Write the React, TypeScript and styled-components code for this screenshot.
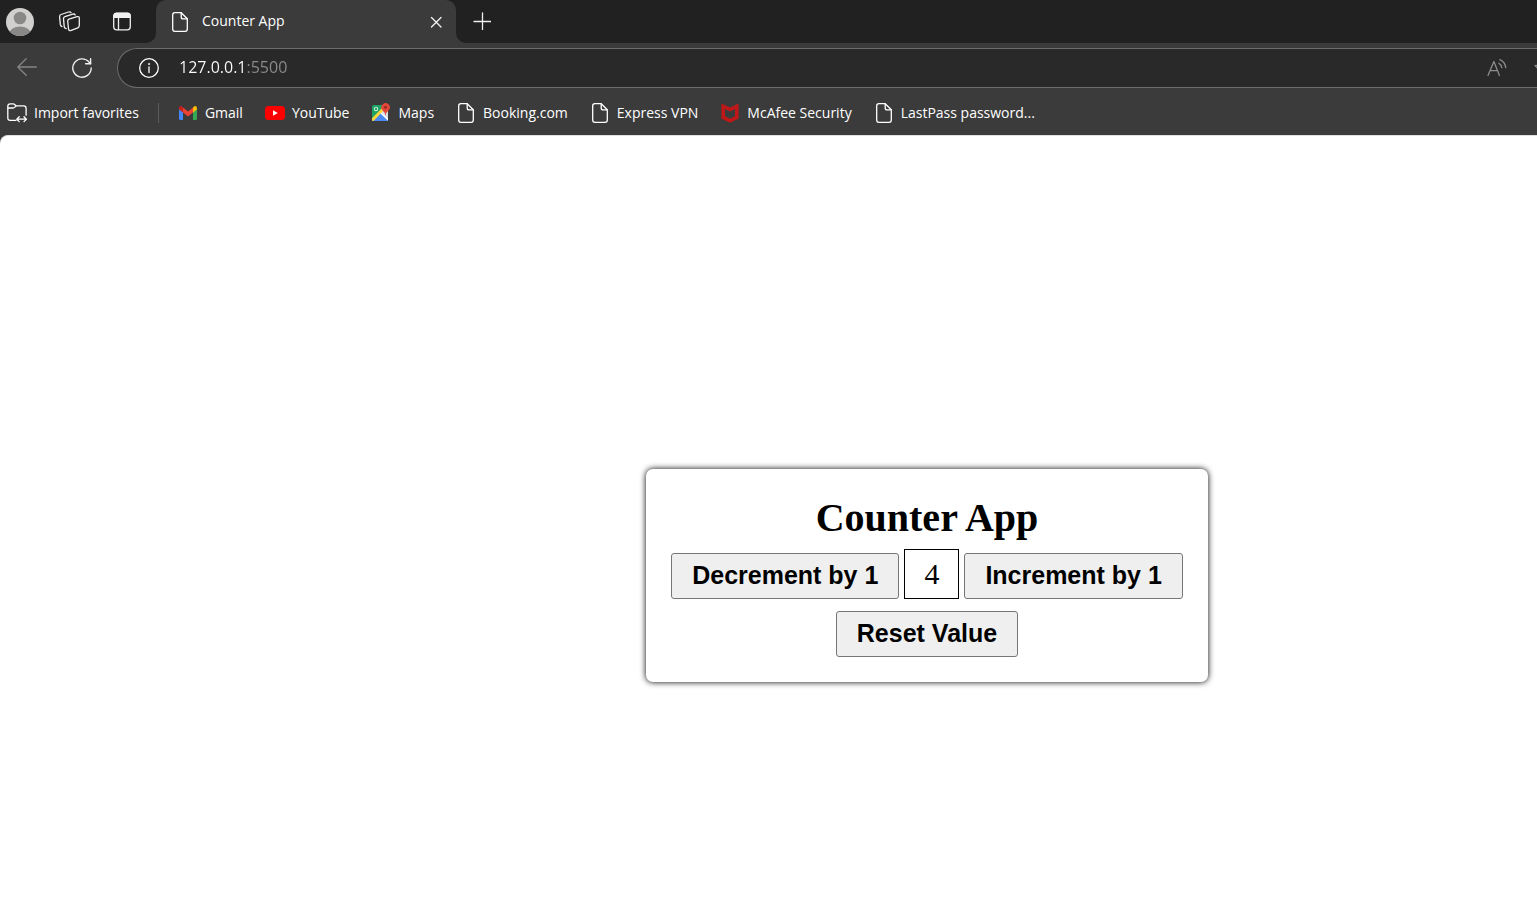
import React, { useState } from "react";
import styled, { createGlobalStyle } from "styled-components";

const GlobalStyle = createGlobalStyle`
  * { box-sizing: border-box; }
  body { margin: 0; background: #3b3b3b; }
`;

const Browser = styled.div`
  display: flex;
  flex-direction: column;
  min-height: 100vh;
  overflow: hidden;
  font-family: "Open Sans", "Noto Sans", sans-serif;
  font-size: 14px;
  line-height: 20px;
  color: #fff;
`;

const TitleBar = styled.header`
  display: flex;
  height: 43px;
`;

const TitleTools = styled.div`
  display: flex;
  align-items: center;
  width: 156px;
  padding-left: 6px;
  background: #212121;
  border-bottom-right-radius: 10px;
`;

const IconButton = styled.button<{ $width: number; $color?: string }>`
  display: flex;
  align-items: center;
  justify-content: center;
  flex: none;
  width: ${(p) => p.$width}px;
  height: 40px;
  padding: 0;
  border: 0;
  background: none;
  color: ${(p) => p.$color ?? "#f0f0f0"};
`;

const TabSlot = styled.div`
  width: 300px;
  background: #212121;
`;

const Tab = styled.div`
  display: flex;
  align-items: center;
  height: 43px;
  padding: 0 6px 0 16px;
  gap: 14px;
  background: #3b3b3b;
  border-radius: 10px 10px 0 0;
`;

const TabTitle = styled.span`
  flex: 1;
  padding-bottom: 2px;
`;

const TitleRest = styled.div`
  display: flex;
  align-items: center;
  flex: 1;
  padding: 0 0 2px 12px;
  background: #212121;
  border-bottom-left-radius: 10px;
`;

const Toolbar = styled.div`
  display: flex;
  align-items: center;
  height: 50px;
`;

const AddressBar = styled.label`
  display: flex;
  align-items: center;
  flex: 1;
  height: 40px;
  margin-left: 8px;
  padding-left: 21px;
  overflow: hidden;
  background: #292929;
  border: 1px solid #6c6c6c;
  border-right: 0;
  border-radius: 20px 0 0 20px;
`;

const AddressInput = styled.input`
  flex: 1;
  min-width: 0;
  margin-left: 20px;
  padding: 0 0 2px;
  border: 0;
  outline: 0;
  font: 16px/24px "Open Sans", "Noto Sans", sans-serif;
  color: #fff;
  background: linear-gradient(90deg, #fff 68px, #8c8c8c 68px);
  -webkit-background-clip: text;
  background-clip: text;
  -webkit-text-fill-color: transparent;
`;

const AddressActions = styled.div`
  display: flex;
  flex: none;
  margin-right: -32px;
`;

const Bookmarks = styled.nav`
  display: flex;
  align-items: center;
  height: 40px;
  margin-bottom: 2px;
  padding-left: 7px;
  gap: 22px;
  white-space: nowrap;
`;

const Bookmark = styled.a`
  display: flex;
  align-items: center;
  gap: 7px;
  color: #fff;
  text-decoration: none;
`;

const BookmarkIcon = styled.span`
  display: flex;
  justify-content: center;
  flex: none;
  width: 20px;
`;

const Divider = styled.span`
  width: 1px;
  height: 20px;
  margin: 0 -3px;
  background: #5c5c5c;
`;

const Page = styled.main`
  display: flex;
  flex: 1;
  align-items: center;
  justify-content: center;
  padding: 108px 0 0 317px;
  background: #fff;
  border-top: 1px solid #e0e0e0;
  border-top-left-radius: 8px;
`;

const Card = styled.section`
  display: flex;
  flex-direction: column;
  align-items: center;
  padding: 25px;
  border-radius: 7px;
  box-shadow: 0 0 6px #000;
  background: #fff;
  color: #000;
`;

const Heading = styled.h1`
  margin: 0 0 8px;
  font: bold 40px/47px "Liberation Serif", serif;
`;

const Controls = styled.div`
  display: flex;
  align-items: flex-end;
  gap: 5px;
  margin-bottom: 12px;
`;

const Value = styled.output`
  padding: 7px 19px;
  border: 1px solid #000;
  font: 30px/34px "Liberation Serif", serif;
`;

const CounterButton = styled.button`
  padding: 7px 20px 9px;
  border: 1px solid #767676;
  border-radius: 3px;
  background: #efefef;
  color: #000;
  font: bold 25px/28px "Liberation Sans", sans-serif;
`;

const line = {
  fill: "none",
  stroke: "currentColor",
  strokeLinecap: "round" as const,
  strokeLinejoin: "round" as const,
};

const AvatarIcon = () => (
  <svg width="28" height="28" viewBox="0 0 28 28">
    <clipPath id="avatar"><circle cx="14" cy="14" r="14" /></clipPath>
    <g clipPath="url(#avatar)">
      <rect width="28" height="28" fill="#d2d0ce" />
      <circle cx="14" cy="10" r="6.3" fill="#8a8886" />
      <ellipse cx="14" cy="25.5" rx="10.5" ry="7" fill="#8a8886" />
    </g>
  </svg>
);

const WorkspacesIcon = () => (
  <svg width="24" height="24" viewBox="0 0 24 24" {...line} strokeWidth="1.3">
    <path d="M11 9.2 19 6.7Q21.3 6.1 21.3 8.3V15.6Q21.3 17.2 19.8 17.8L13.2 20.4Q10.8 21.1 10.5 18.8L9.7 11.2Q9.6 9.7 11 9.2Z" />
    <path d="M8.2 18.6Q6.4 18.4 6.2 16.6L5.5 8.6Q5.4 7.1 6.9 6.6L14.8 4.1Q16.6 3.6 17.2 5" />
    <path d="M4 16.6Q2.5 16 2.3 14.4L1.6 6.6Q1.5 5 3 4.5L10.6 2Q12.3 1.5 13 2.7" />
  </svg>
);

const TabActionsIcon = () => (
  <svg width="24" height="24" viewBox="0 0 24 24" {...line} strokeWidth="1.3">
    <rect x="3.7" y="3.2" width="16.6" height="16.6" rx="3" />
    <path d="M4 7.3V6Q4 3.5 6.5 3.5h11Q20 3.5 20 6v1.3Z" fill="currentColor" />
    <path d="M8.5 7.5v12" />
  </svg>
);

const PageIcon = () => (
  <svg width="16" height="20" viewBox="0 0 16 20" {...line} strokeWidth="1.3">
    <path d="M9.2.7H2.9Q.7.7.7 2.9v14.2q0 2.2 2.2 2.2h10.2q2.2 0 2.2-2.2V6.8Z" />
    <path d="M9.2.9v4q0 1.9 1.9 1.9h4" />
  </svg>
);

const CloseIcon = () => (
  <svg width="12" height="12" viewBox="0 0 12 12" {...line} strokeWidth="1.4">
    <path d="m1.5 1.5 9.5 9.5M11 1.5 1.5 11" />
  </svg>
);

const PlusIcon = () => (
  <svg width="18" height="18" viewBox="0 0 18 18" {...line} strokeWidth="1.3">
    <path d="M9.5 1v17M1 9.5h17" />
  </svg>
);

const BackIcon = () => (
  <svg width="20" height="20" viewBox="0 0 20 20" {...line} strokeWidth="1.3">
    <path d="M19.3 9H.8M9.2.8.8 9l8.4 8.2" />
  </svg>
);

const ReloadIcon = () => (
  <svg width="20" height="20" viewBox="0 0 20 20" {...line} strokeWidth="1.4">
    <path d="M19.2 10A9.2 9.2 0 1 1 17.2 4.3L18.6 5.8" />
    <path d="M18.6.8v5h-5" />
  </svg>
);

const InfoIcon = () => (
  <svg width="20" height="20" viewBox="0 0 20 20" {...line} strokeWidth="1.3">
    <circle cx="10" cy="10" r="9.3" />
    <path d="M10 9v5.5" />
    <circle cx="10" cy="6" r=".6" fill="currentColor" strokeWidth=".7" />
  </svg>
);

const ReadAloudIcon = () => (
  <svg width="20" height="18" viewBox="0 0 20 18" {...line} strokeWidth="1.3">
    <path d="M1 16.5 6.9 2.5 12.4 16.5M3 11.7h7.6M11.8 4.2Q14.6 5.7 14.8 8.7M12.8.7Q18.3 3.1 18.7 8.7" />
  </svg>
);

const StarIcon = () => (
  <svg width="20" height="20" viewBox="0 0 20 20" {...line} strokeWidth="1.3">
    <path d="m10 1 2.8 5.7 6.2.9-4.5 4.4 1 6.2-5.5-2.9-5.5 2.9 1-6.2L1 7.6l6.2-.9Z" />
  </svg>
);

const ImportIcon = () => (
  <svg width="20" height="20" viewBox="0 0 20 20" {...line} strokeWidth="1.3">
    <path d="M9 17.3H3.2Q.8 17.3.8 14.9V3.2Q.8.9 3.2.9h3Q7 .9 7.6 1.5l1.3 1.3h7.8q2.4 0 2.4 2.4v7" />
    <path d="M1 5h5.2Q7 5 7.6 4.4L9 2.9M10 16.2h9.3M12.2 13.8 9.8 16.2l2.4 2.4M17 13.8l2.4 2.4-2.4 2.4" />
  </svg>
);

const GmailIcon = () => (
  <svg width="20" height="20" viewBox="0 0 20 20">
    <path d="M1 6v9.8Q1 17 2.2 17H5V8.8Z" fill="#4285f4" />
    <path d="M15 8.8V17h2.8q1.2 0 1.2-1.2V6Z" fill="#34a853" />
    <path d="M15 4.6v5l4-3V5.2Q19 3 17 3q-.7 0-1.2.4Z" fill="#fbbc04" />
    <path d="m5 4.6 5 3.8 5-3.8v5l-5 3.8-5-3.8Z" fill="#ea4335" />
    <path d="M5 4.6v5l-4-3V5.2Q1 3 3 3q.7 0 1.2.4Z" fill="#c5221f" />
  </svg>
);

const YouTubeIcon = () => (
  <svg width="20" height="20" viewBox="0 0 20 20">
    <rect y="3" width="20" height="14" rx="3.5" fill="#f00" />
    <path d="m8 7.3 4.8 2.7L8 12.7Z" fill="#fff" />
  </svg>
);

const MapsIcon = () => (
  <svg width="20" height="20" viewBox="0 0 20 20">
    <clipPath id="map"><rect x="1" y="2" width="16" height="16" rx="1.5" /></clipPath>
    <g clipPath="url(#map)">
      <rect width="18" height="18" fill="#1ea362" />
      <path d="M1 18 17 2v16Z" fill="#dadce0" />
      <path d="m1 18 9-8.5 8 8.5Z" fill="#4a89f3" />
      <path d="M1 15.2 14 2l3 1L2.5 18H1Z" fill="#ffd83b" />
      <path d="m10.2 10.2 7.8 7.3" stroke="#fff" strokeWidth="1.6" />
    </g>
    <circle cx="5" cy="6" r="1.7" fill="none" stroke="#c6ebd7" strokeWidth="1.1" />
    <path d="M14.5 13Q14 9 11.5 7.2A4.2 4.2 0 1 1 17.7 7.2Q15 9 14.5 13Z" fill="#e2473a" />
    <circle cx="14.6" cy="4.3" r="1.4" fill="#8c2a20" />
  </svg>
);

const McAfeeIcon = () => (
  <svg width="20" height="20" viewBox="0 0 20 20">
    <path fillRule="evenodd" fill="#c01818" d="m1.4.4 8.6 4 8.6-4v15.2L10 19.8l-8.6-4.2ZM5 6v7.3l5 2.4 5-2.4V6l-5 2.4Z" />
  </svg>
);

const bookmarks = [
  { label: "Gmail", icon: <GmailIcon /> },
  { label: "YouTube", icon: <YouTubeIcon /> },
  { label: "Maps", icon: <MapsIcon /> },
  { label: "Booking.com", icon: <PageIcon /> },
  { label: "Express VPN", icon: <PageIcon /> },
  { label: "McAfee Security", icon: <McAfeeIcon /> },
  { label: "LastPass password...", icon: <PageIcon /> },
];

export default function App() {
  const [count, setCount] = useState(4);
  const [address, setAddress] = useState("127.0.0.1:5500");

  return (
    <Browser>
      <GlobalStyle />
      <TitleBar>
        <TitleTools>
          <IconButton $width={28} aria-label="Profile"><AvatarIcon /></IconButton>
          <IconButton $width={72} aria-label="Workspaces"><WorkspacesIcon /></IconButton>
          <IconButton $width={32} aria-label="Tab actions"><TabActionsIcon /></IconButton>
        </TitleTools>
        <TabSlot>
          <Tab>
            <PageIcon />
            <TabTitle>Counter App</TabTitle>
            <IconButton $width={28} aria-label="Close tab"><CloseIcon /></IconButton>
          </Tab>
        </TabSlot>
        <TitleRest>
          <IconButton $width={28} aria-label="New tab"><PlusIcon /></IconButton>
        </TitleRest>
      </TitleBar>

      <Toolbar>
        <IconButton $width={54} $color="#858585" aria-label="Back"><BackIcon /></IconButton>
        <IconButton $width={55} aria-label="Reload"><ReloadIcon /></IconButton>
        <AddressBar>
          <InfoIcon />
          <AddressInput
            type="text"
            aria-label="Address"
            value={address}
            onChange={(e) => setAddress(e.target.value)}
          />
          <AddressActions>
            <IconButton $width={44} $color="#8c8c8c" aria-label="Read aloud"><ReadAloudIcon /></IconButton>
            <IconButton $width={50} $color="#8c8c8c" aria-label="Add to favorites"><StarIcon /></IconButton>
          </AddressActions>
        </AddressBar>
      </Toolbar>

      <Bookmarks>
        <Bookmark href="#import">
          <BookmarkIcon><ImportIcon /></BookmarkIcon>
          Import favorites
        </Bookmark>
        <Divider />
        {bookmarks.map((b) => (
          <Bookmark key={b.label} href="#bookmark">
            <BookmarkIcon>{b.icon}</BookmarkIcon>
            {b.label}
          </Bookmark>
        ))}
      </Bookmarks>

      <Page>
        <Card>
          <Heading>Counter App</Heading>
          <Controls>
            <CounterButton onClick={() => setCount(count - 1)}>Decrement by 1</CounterButton>
            <Value>{count}</Value>
            <CounterButton onClick={() => setCount(count + 1)}>Increment by 1</CounterButton>
          </Controls>
          <CounterButton onClick={() => setCount(0)}>Reset Value</CounterButton>
        </Card>
      </Page>
    </Browser>
  );
}
